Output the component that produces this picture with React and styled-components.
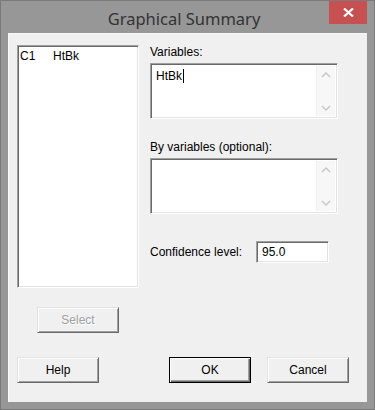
import styled, { createGlobalStyle } from 'styled-components'

const GlobalStyle = createGlobalStyle`
  html, body {
    margin: 0;
    padding: 0;
  }
  body {
    width: 375px;
    height: 410px;
    overflow: hidden;
    font-family: "Liberation Sans", Arial, sans-serif;
    font-size: 12px;
    color: #000;
  }
`

const Window = styled.div`
  box-sizing: border-box;
  width: 375px;
  height: 410px;
  display: flex;
  flex-direction: column;
  background: #979797;
  border: 1px solid #7a7a7a;
`

const TitleBar = styled.div`
  display: grid;
  grid-template-columns: 1fr auto 1fr;
  height: 32px;
  padding-right: 7px;
`

const Title = styled.div`
  grid-column: 2;
  align-self: center;
  padding-top: 2px;
  font-family: "Noto Sans", "Open Sans", sans-serif;
  font-size: 16.5px;
  color: #333;
`

const CloseButton = styled.button`
  grid-column: 3;
  justify-self: end;
  align-self: start;
  width: 38px;
  height: 23px;
  display: flex;
  align-items: center;
  justify-content: center;
  padding: 0;
  border: none;
  background: #c75050;
`

const Client = styled.div`
  flex: 1;
  display: flex;
  flex-direction: column;
  margin: 0 7px 7px;
  padding: 12px 9px 0;
  background: #f0f0f0;
  box-shadow: inset 1px 1px #f8f8f8;
`

const TopSection = styled.div`
  display: flex;
  gap: 11px;
`

const LeftColumn = styled.div`
  display: flex;
  flex-direction: column;
  width: 122px;
`

const RightColumn = styled.div`
  display: flex;
  flex-direction: column;
  width: 188px;
`

const sunken = `
  box-sizing: border-box;
  background: #fff;
  border: 1px solid;
  border-color: #a0a0a0 #fff #fff #a0a0a0;
  box-shadow: inset 1px 1px #696969, inset -1px -1px #e3e3e3;
`

const ListBox = styled.div`
  ${sunken}
  height: 243px;
  padding: 3px 2px;
`

const ListRow = styled.div`
  display: flex;
  line-height: 15px;
`

const ListCell = styled.span`
  width: ${({ $w }) => ($w ? `${$w}px` : 'auto')};
`

const Label = styled.div`
  line-height: 15px;
  margin-top: ${({ $mt }) => $mt || 0}px;
  margin-bottom: 3px;
`

const TextBox = styled.div`
  ${sunken}
  display: flex;
  height: 56px;
  padding: 2px;
`

const TextArea = styled.div`
  flex: 1;
  padding: 3px 3px;
  line-height: 15px;
`

const Caret = styled.span`
  display: inline-block;
  width: 1px;
  height: 14px;
  margin-left: 1px;
  vertical-align: -3px;
  background: #000;
`

const ScrollColumn = styled.div`
  width: 18px;
  display: flex;
  flex-direction: column;
  justify-content: space-between;
  align-items: center;
  padding: 6px 0 5px;
  background: #f7f7f7;
  border-left: 1px solid #f0f0f0;
`

const Chevron = ({ down }) => (
  <svg width="10" height="6" viewBox="0 0 10 6">
    <path
      d={down ? 'M1 1 L5 5 L9 1' : 'M1 5 L5 1 L9 5'}
      fill="none"
      stroke="#c4c4c4"
      strokeWidth="1.3"
    />
  </svg>
)

const ConfidenceRow = styled.div`
  display: flex;
  align-items: center;
  margin-top: 27px;
`

const ConfidenceLabel = styled.span`
  width: 106px;
`

const NumberInput = styled.div`
  ${sunken}
  width: 73px;
  height: 22px;
  padding: 3px 5px;
  line-height: 15px;
`

const Button = styled.button`
  box-sizing: border-box;
  width: 82px;
  height: 26px;
  padding: 0;
  font-family: "Liberation Sans", Arial, sans-serif;
  font-size: 12px;
  color: ${({ disabled }) => (disabled ? '#a0a0a0' : '#000')};
  text-shadow: ${({ disabled }) => (disabled ? '1px 1px #fff' : 'none')};
  background: #f0f0f0;
  border: 1px solid;
  border-color: ${({ $default }) =>
    $default ? '#000' : '#e3e3e3 #696969 #696969 #e3e3e3'};
  box-shadow: ${({ $default }) =>
    $default
      ? 'inset 1px 1px #fff, inset -1px -1px #696969, inset -2px -2px #a0a0a0'
      : 'inset 1px 1px #fff, inset -1px -1px #a0a0a0'};
`

const SelectButton = styled(Button)`
  margin: 19px 0 0 20px;
`

const BottomRow = styled.div`
  display: flex;
  gap: 16px;
  margin-top: 24px;
  padding-right: 9px;
`

const HelpButton = styled(Button)`
  margin-right: auto;
`

export default function App() {
  return (
    <>
      <GlobalStyle />
      <Window>
        <TitleBar>
          <Title>Graphical Summary</Title>
          <CloseButton aria-label="Close">
            <svg width="11" height="9" viewBox="0 0 11 9">
              <path d="M1 0.5 L10 8.5 M10 0.5 L1 8.5" stroke="#fff" strokeWidth="2.2" />
            </svg>
          </CloseButton>
        </TitleBar>
        <Client>
          <TopSection>
            <LeftColumn>
              <ListBox>
                <ListRow>
                  <ListCell $w={33}>C1</ListCell>
                  <ListCell>HtBk</ListCell>
                </ListRow>
              </ListBox>
              <SelectButton disabled>Select</SelectButton>
            </LeftColumn>
            <RightColumn>
              <Label>Variables:</Label>
              <TextBox>
                <TextArea>
                  HtBk<Caret />
                </TextArea>
                <ScrollColumn>
                  <Chevron />
                  <Chevron down />
                </ScrollColumn>
              </TextBox>
              <Label $mt={21}>By variables (optional):</Label>
              <TextBox>
                <TextArea />
                <ScrollColumn>
                  <Chevron />
                  <Chevron down />
                </ScrollColumn>
              </TextBox>
              <ConfidenceRow>
                <ConfidenceLabel>Confidence level:</ConfidenceLabel>
                <NumberInput>95.0</NumberInput>
              </ConfidenceRow>
            </RightColumn>
          </TopSection>
          <BottomRow>
            <HelpButton>Help</HelpButton>
            <Button $default>OK</Button>
            <Button>Cancel</Button>
          </BottomRow>
        </Client>
      </Window>
    </>
  )
}
